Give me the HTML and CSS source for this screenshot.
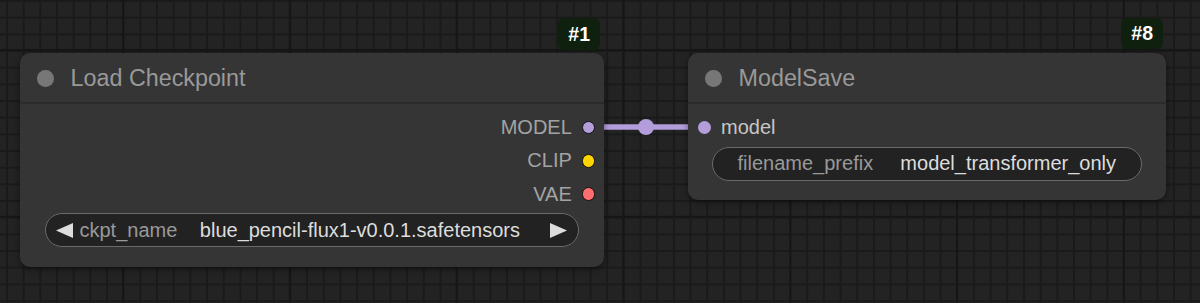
FILE: index.html
```html
<!DOCTYPE html>
<html lang="en">
<head>
  <meta charset="UTF-8" />
  <meta name="viewport" content="width=device-width, initial-scale=1.0" />
  <title>Graph</title>
  <link rel="stylesheet" href="styles.css">
</head>
<body>
  <div class="canvas">

    <!-- Link: Load Checkpoint.MODEL -> ModelSave.model -->
    <svg class="link" width="116" height="20" viewBox="0 0 116 20">
      <line x1="0" y1="10" x2="116" y2="10" stroke="#b39ddb" stroke-width="5.5" />
      <circle cx="58" cy="10" r="8" fill="#b39ddb" />
    </svg>

    <!-- Node #1 -->
    <div class="node node-ckpt">
      <div class="badge">#1</div>
      <div class="node-title"><span class="title-dot"></span>Load Checkpoint</div>
      <div class="node-body">
        <div class="slot output"><span>MODEL</span><i class="dot dot-model"></i></div>
        <div class="slot output"><span>CLIP</span><i class="dot dot-clip"></i></div>
        <div class="slot output"><span>VAE</span><i class="dot dot-vae"></i></div>
        <div class="widget combo">
          <svg class="arrow" width="17" height="15" viewBox="0 0 17 15"><polygon points="17,0 17,15 0,7.5" fill="#ddd" /></svg>
          <span class="w-label">ckpt_name</span>
          <span class="w-value">blue_pencil-flux1-v0.0.1.safetensors</span>
          <svg class="arrow" width="17" height="15" viewBox="0 0 17 15"><polygon points="0,0 0,15 17,7.5" fill="#ddd" /></svg>
        </div>
      </div>
    </div>

    <!-- Node #8 -->
    <div class="node node-save">
      <div class="badge">#8</div>
      <div class="node-title"><span class="title-dot"></span>ModelSave</div>
      <div class="node-body">
        <div class="slot input"><i class="dot dot-model flat"></i><span>model</span></div>
        <div class="widget text">
          <span class="w-label">filename_prefix</span>
          <span class="w-value">model_transformer_only</span>
        </div>
      </div>
    </div>

  </div>
</body>
</html>
```

FILE: styles.css
```css
* {
  margin: 0;
  padding: 0;
  box-sizing: border-box;
  font-family: 'Liberation Sans', Arial, sans-serif;
}

body, html {
  height: 100%;
  overflow: hidden;
}

/* graph canvas with minor + major grid lines */
.canvas {
  position: relative;
  width: 100%;
  height: 100%;
  background-color: #232323;
  background-image:
    linear-gradient(to right, #161616 2px, transparent 2px),
    linear-gradient(to bottom, #161616 2px, transparent 2px),
    linear-gradient(to right, #1a1a1a 1.5px, transparent 1.5px),
    linear-gradient(to bottom, #1a1a1a 1.5px, transparent 1.5px);
  background-size: 166.8px 100%, 100% 166.8px, 16.68px 100%, 100% 16.68px;
  background-position: 122px 0, 0 49px, 6px 0, 0 0;
}

.link {
  position: absolute;
  left: 588px;
  top: 117px;
  z-index: 0;
}

.node {
  position: absolute;
  top: 53px;
  background: #353535;
  border-radius: 10px;
  box-shadow: 0 2px 6px rgba(0, 0, 0, 0.45);
  z-index: 1;
}

.node-ckpt {
  left: 20px;
  width: 584px;
}

.node-save {
  left: 688px;
  width: 478px;
}

.badge {
  position: absolute;
  right: 4px;
  bottom: calc(100% + 3px);
  height: 32px;
  padding: 0 10px;
  display: flex;
  align-items: center;
  background: #0f200f;
  border-radius: 6px;
  color: #fff;
  font-size: 19.5px;
  font-weight: bold;
}

.node-save .badge {
  right: 3px;
  height: 31px;
  bottom: calc(100% + 4px);
}

.node-title {
  height: 51px;
  display: flex;
  align-items: center;
  gap: 17px;
  padding: 2px 0 0 17px;
  border-bottom: 2px solid #2b2b2b;
  color: #999;
  font-size: 23.3px;
}

.title-dot {
  width: 16.6px;
  height: 16.6px;
  border-radius: 50%;
  background: #777;
}

.node-body {
  padding: 7px 0 20px;
}

.node-save .node-body {
  padding-bottom: 19px;
}

.slot {
  height: 33.3px;
  display: flex;
  align-items: center;
  gap: 10px;
  font-size: 20px;
}

.slot.output {
  justify-content: flex-end;
  padding-right: 8.6px;
  color: #a3a3a3;
}

.slot.input {
  padding-left: 9.5px;
  gap: 10.5px;
  color: #c6c6c6;
}

.dot {
  width: 13.6px;
  height: 13.6px;
  border-radius: 50%;
  border: 1.6px solid #111;
}

.dot.flat {
  border: none;
  width: 13px;
  height: 13px;
}

.dot-model { background: #b39ddb; }
.dot-clip  { background: #ffd500; }
.dot-vae   { background: #ff6e6e; }

.widget {
  height: 34px;
  margin: 2.5px 25px 0;
  display: flex;
  align-items: center;
  background: #222;
  border: 1.5px solid #6a6a6a;
  border-radius: 17px;
  font-size: 20px;
}

.w-label {
  color: #999;
}

.w-value {
  flex: 1;
  text-align: right;
  color: #ddd;
  white-space: nowrap;
}

.combo {
  padding: 0 11px 0 9.5px;
}

.combo .w-label {
  margin-left: 7px;
}

.combo .w-value {
  margin-right: 30px;
}

.text {
  margin-left: 24px;
  margin-right: 24px;
  padding: 0 25px 0 24.5px;
}
```
